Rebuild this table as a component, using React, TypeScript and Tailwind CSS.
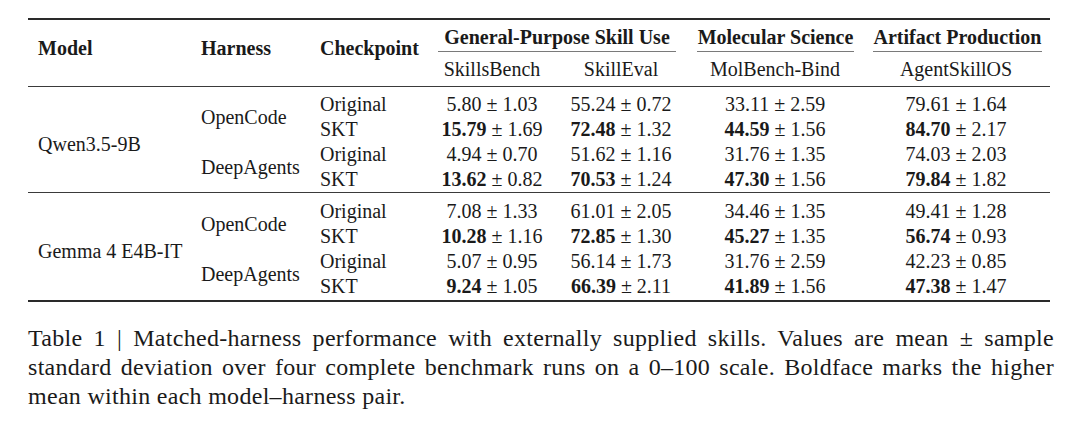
import React from 'react';

type Cell = [string, string, boolean];

interface Row {
  checkpoint: string;
  cells: Cell[];
}

interface HarnessBlock {
  name: string;
  rows: Row[];
}

interface ModelGroup {
  model: string;
  harnesses: HarnessBlock[];
}

const groups: ModelGroup[] = [
  {
    model: 'Qwen3.5-9B',
    harnesses: [
      {
        name: 'OpenCode',
        rows: [
          { checkpoint: 'Original', cells: [['5.80', '1.03', false], ['55.24', '0.72', false], ['33.11', '2.59', false], ['79.61', '1.64', false]] },
          { checkpoint: 'SKT', cells: [['15.79', '1.69', true], ['72.48', '1.32', true], ['44.59', '1.56', true], ['84.70', '2.17', true]] },
        ],
      },
      {
        name: 'DeepAgents',
        rows: [
          { checkpoint: 'Original', cells: [['4.94', '0.70', false], ['51.62', '1.16', false], ['31.76', '1.35', false], ['74.03', '2.03', false]] },
          { checkpoint: 'SKT', cells: [['13.62', '0.82', true], ['70.53', '1.24', true], ['47.30', '1.56', true], ['79.84', '1.82', true]] },
        ],
      },
    ],
  },
  {
    model: 'Gemma 4 E4B-IT',
    harnesses: [
      {
        name: 'OpenCode',
        rows: [
          { checkpoint: 'Original', cells: [['7.08', '1.33', false], ['61.01', '2.05', false], ['34.46', '1.35', false], ['49.41', '1.28', false]] },
          { checkpoint: 'SKT', cells: [['10.28', '1.16', true], ['72.85', '1.30', true], ['45.27', '1.35', true], ['56.74', '0.93', true]] },
        ],
      },
      {
        name: 'DeepAgents',
        rows: [
          { checkpoint: 'Original', cells: [['5.07', '0.95', false], ['56.14', '1.73', false], ['31.76', '2.59', false], ['42.23', '0.85', false]] },
          { checkpoint: 'SKT', cells: [['9.24', '1.05', true], ['66.39', '2.11', true], ['41.89', '1.56', true], ['47.38', '1.47', true]] },
        ],
      },
    ],
  },
];

// grid columns: Model | Harness | Checkpoint | SkillsBench | SkillEval | MolBench-Bind | AgentSkillOS
const cols = 'grid grid-cols-[163px_119px_126px_112px_146px_162px_194px]';

const ValueCell: React.FC<{ cell: Cell; last?: boolean }> = ({ cell, last }) => {
  const [mean, sd, bold] = cell;
  return (
    <div className={`flex h-[25px] items-center justify-center whitespace-nowrap ${last ? 'pl-[6px]' : ''}`}>
      <span className={bold ? 'font-bold' : ''}>{mean}</span>
      <span>&nbsp;±&nbsp;{sd}</span>
    </div>
  );
};

const GroupBody: React.FC<{ group: ModelGroup; first: boolean }> = ({ group, first }) => (
  <div className={`${cols} grid-rows-[25px_25px_25px_25px] ${first ? 'pt-[4px] pb-[1px]' : 'pt-[5px] pb-[2px]'}`}>
    <div className="flex items-center pl-[10px] pt-[6px]" style={{ gridColumn: 1, gridRow: '1 / span 4' }}>
      {group.model}
    </div>
    {group.harnesses.map((h, hi) => (
      <React.Fragment key={h.name}>
        <div
          className="flex items-center pl-[10px] pt-[2px]"
          style={{ gridColumn: 2, gridRow: `${hi * 2 + 1} / span 2` }}
        >
          {h.name}
        </div>
        {h.rows.map((r, ri) => {
          const row = hi * 2 + ri + 1;
          return (
            <React.Fragment key={r.checkpoint}>
              <div className="flex h-[25px] items-center pl-[10px]" style={{ gridColumn: 3, gridRow: row }}>
                {r.checkpoint}
              </div>
              {r.cells.map((c, ci) => (
                <div key={ci} style={{ gridColumn: ci + 4, gridRow: row }}>
                  <ValueCell cell={c} last={ci === 3} />
                </div>
              ))}
            </React.Fragment>
          );
        })}
      </React.Fragment>
    ))}
  </div>
);

export default function App() {
  return (
    <div className="min-h-[423px] w-[1080px] bg-white pt-[18px] pl-[28px] pr-[26px] font-['Liberation_Serif',serif] text-[#1a1a1a]">
      <div className="w-[1022px] text-[20px] leading-none">
        {/* header */}
        <div className={`${cols} grid-rows-[32px_34px] border-t-2 border-b border-t-[#2a2a2a] border-b-[#3a3a3a]`}>
          <div className="row-span-2 flex items-center pl-[10px] pb-[10px] font-bold">Model</div>
          <div className="row-span-2 flex items-center pl-[10px] pb-[10px] font-bold">Harness</div>
          <div className="row-span-2 flex items-center pl-[10px] pb-[10px] font-bold">Checkpoint</div>
          <div className="col-span-2 ml-[2px] mr-[18px] flex items-center justify-center whitespace-nowrap border-b border-[#7a7a7a] pt-[2px] font-bold">
            General-Purpose Skill Use
          </div>
          <div className="ml-[3px] mr-[2px] flex items-center justify-center whitespace-nowrap border-b border-[#7a7a7a] pt-[2px] font-bold">
            Molecular Science
          </div>
          <div className="ml-[17px] mr-[8px] flex items-center justify-center whitespace-nowrap border-b border-[#7a7a7a] pt-[2px] font-bold">
            Artifact Production
          </div>
          <div className="col-start-4 flex items-center justify-center">SkillsBench</div>
          <div className="flex items-center justify-center">SkillEval</div>
          <div className="flex items-center justify-center">MolBench-Bind</div>
          <div className="flex items-center justify-center pl-[6px]">AgentSkillOS</div>
        </div>

        {/* body */}
        {groups.map((g, gi) => (
          <div key={g.model} className={gi === 0 ? 'border-b border-[#3a3a3a]' : 'border-b-2 border-[#2a2a2a]'}>
            <GroupBody group={g} first={gi === 0} />
          </div>
        ))}
      </div>

      {/* caption */}
      <div className="mt-[22px] text-[24px] leading-[29px] tracking-[0.012em]">
        <span className="block text-justify [text-align-last:justify]">
          Table 1 | Matched-harness performance with externally supplied skills. Values are mean ± sample
        </span>
        <span className="block text-justify [text-align-last:justify]">
          standard deviation over four complete benchmark runs on a 0–100 scale. Boldface marks the higher
        </span>
        <span className="block">mean within each model–harness pair.</span>
      </div>
    </div>
  );
}
